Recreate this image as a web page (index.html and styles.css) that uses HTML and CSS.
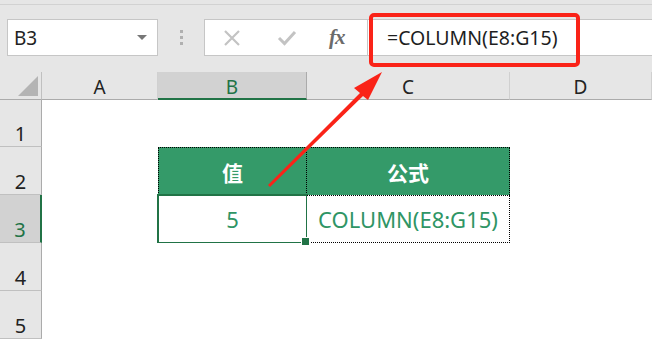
FILE: index.html
```html
<!DOCTYPE html>
<html>
<head>
<meta charset="utf-8">
<link rel="stylesheet" href="styles.css">
</head>
<body>
<div class="app">
  <div class="toolbar">
    <div class="namebox">
      <span class="name">B3</span>
      <span class="caret"></span>
    </div>
    <div class="grip"><i></i><i></i><i></i></div>
    <div class="formula">
      <div class="fbtns">
        <svg class="ico" width="18" height="18" viewBox="0 0 18 18"><path d="M2 2 L16 16 M16 2 L2 16" stroke="#c3c3c3" stroke-width="2.2" fill="none"/></svg>
        <svg class="ico" width="20" height="18" viewBox="0 0 20 18"><path d="M2 9 L7.5 14.5 L18 3" stroke="#c3c3c3" stroke-width="3" fill="none"/></svg>
        <span class="fx">fx</span>
      </div>
      <div class="finput">=COLUMN(E8:G15)</div>
    </div>
  </div>
  <div class="sheet">
    <div class="corner"><span class="tri"></span></div>
    <div class="colh">A</div>
    <div class="colh active">B</div>
    <div class="colh">C</div>
    <div class="colh">D</div>

    <div class="rowh">1</div>
    <div class="cell"></div><div class="cell"></div><div class="cell"></div><div class="cell"></div>

    <div class="rowh">2</div>
    <div class="cell"></div>
    <div class="cell th th-b">值</div>
    <div class="cell th th-c">公式</div>
    <div class="cell"></div>

    <div class="rowh active">3</div>
    <div class="cell"></div>
    <div class="cell td td-b sel">5</div>
    <div class="cell td td-c">COLUMN(E8:G15)</div>
    <div class="cell"></div>

    <div class="rowh">4</div>
    <div class="cell"></div><div class="cell"></div><div class="cell"></div><div class="cell"></div>

    <div class="rowh">5</div>
    <div class="cell"></div><div class="cell"></div><div class="cell"></div><div class="cell"></div>
  </div>
  <div class="callout"></div>
  <svg class="arrow" width="652" height="342" viewBox="0 0 652 342">
    <path d="M268 185 L360 93 L354 88 L382 72 L368 100 L363 96 L270 187 Z" fill="#fa2318"/>
  </svg>
</div>
</body>
</html>
```

FILE: styles.css
```css
* { box-sizing: border-box; }
html, body { margin: 0; padding: 0; }
body {
  width: 652px;
  height: 342px;
  overflow: hidden;
  background: #fff;
  font-family: "Noto Sans", "Noto Sans CJK SC", sans-serif;
}
.app { position: relative; width: 652px; height: 342px; }

.toolbar {
  height: 72px;
  background: #e6e6e6;
  border-top: 4px solid #e6e6e6;
  box-shadow: inset 0 1px 0 #d2d2d2;
  display: flex;
  align-items: flex-start;
  padding: 15px 0 0 7px;
}
.namebox {
  width: 151px;
  height: 37px;
  background: #fff;
  border: 1px solid #c6c6c6;
  display: flex;
  align-items: center;
  justify-content: space-between;
  padding: 0 10px 0 6px;
}
.name { font-size: 19px; color: #222; }
.caret {
  width: 0; height: 0;
  border-left: 5px solid transparent;
  border-right: 5px solid transparent;
  border-top: 5px solid #777;
}
.grip {
  width: 46px;
  height: 37px;
  display: flex;
  flex-direction: column;
  align-items: center;
  justify-content: center;
  gap: 3px;
}
.grip i { display: block; width: 3px; height: 3px; background: #b0b0b0; }
.formula {
  flex: 1;
  height: 37px;
  display: flex;
  background: #fff;
  border: 1px solid #c6c6c6;
  border-right: none;
}
.fbtns {
  width: 163px;
  border-right: 1px solid #c6c6c6;
  display: flex;
  align-items: center;
  padding-left: 18px;
}
.fbtns .ico:nth-child(1) { margin-right: 36px; }
.fbtns .ico:nth-child(2) { margin-right: 32px; }
.fx {
  font-family: "Liberation Serif", "DejaVu Serif", serif;
  font-style: italic;
  font-weight: bold;
  font-size: 21px;
  color: #6b6b6b;
  letter-spacing: -1px;
}
.finput {
  flex: 1;
  display: flex;
  align-items: center;
  padding-left: 19px;
  font-size: 19.5px;
  color: #1e1e1e;
}

.sheet {
  display: grid;
  grid-template-columns: 42px 116px 149px 203px 142px;
  grid-template-rows: 28px 47px 48px 48px 48px 48px;
}
.corner {
  background: #e6e6e6;
  border-right: 1px solid #c0c0c0;
  border-bottom: 1px solid #ababab;
  position: relative;
}
.tri {
  position: absolute;
  right: 3px; bottom: 3px;
  width: 0; height: 0;
  border-left: 20px solid transparent;
  border-bottom: 20px solid #b4b4b4;
}
.colh {
  background: #e6e6e6;
  border-bottom: 1px solid #ababab;
  border-right: 1px solid #d0d0d0;
  display: flex;
  align-items: flex-end;
  justify-content: center;
  font-size: 19px;
  line-height: 23px;
  color: #222;
}
.colh.active {
  background: #d2d2d2;
  border-bottom: 2px solid #217346;
  border-right: 1px solid #ababab;
  color: #217346;
  line-height: 22px;
}
.rowh {
  background: #e6e6e6;
  border-right: 1px solid #ababab;
  border-bottom: 1px solid #c0c0c0;
  display: flex;
  align-items: flex-end;
  justify-content: center;
  font-size: 20px;
  line-height: 24px;
  color: #222;
}
.rowh.active {
  background: #d2d2d2;
  border-right: 2px solid #217346;
  color: #217346;
}
.cell { background: #fff; position: relative; }
.th {
  background: #349a69;
  color: #fff;
  font-weight: bold;
  font-size: 21px;
  display: flex;
  align-items: center;
  justify-content: center;
  font-family: "Noto Sans CJK SC", sans-serif;
  border-top: 1px dotted #000;
}
.th-b { border-left: 1px dotted #000; border-right: 1px dotted #000; }
.th-c { border-right: 1px dotted #000; }
.td {
  display: flex;
  align-items: center;
  justify-content: center;
  font-size: 22px;
  color: #2f9565;
}
.td-c {
  border-top: 1px dotted #000;
  border-right: 1px dotted #000;
  border-bottom: 1px dotted #000;
}
.sel::after {
  content: "";
  position: absolute;
  left: -1px; top: -1px; right: -1px; bottom: -1px;
  border: 2px solid #217346;
}
.sel::before {
  content: "";
  position: absolute;
  right: -3px; bottom: -3px;
  width: 7px; height: 7px;
  background: #217346;
  border: 1px solid #fff;
  z-index: 2;
}

.callout {
  position: absolute;
  left: 369px; top: 13px;
  width: 211px; height: 54px;
  border: 4px solid #fa2318;
  border-radius: 5px;
}
.arrow { position: absolute; left: 0; top: 0; pointer-events: none; }
```
